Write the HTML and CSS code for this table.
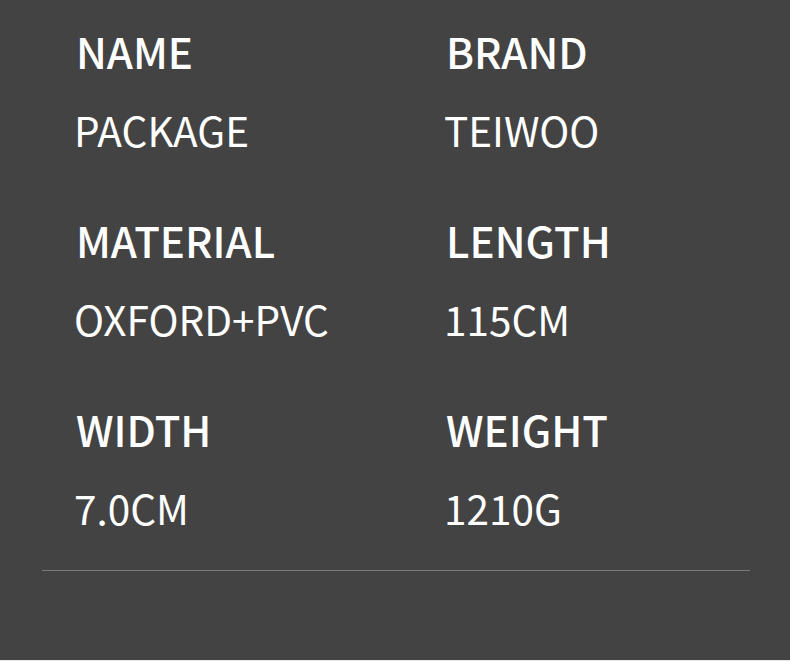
FILE: index.html
```html
<!DOCTYPE html>
<html>
<head>
<meta charset="utf-8">
<link rel="stylesheet" href="styles.css">
</head>
<body>
<section class="panel">
  <div class="specs">
    <div class="item"><div class="label">NAME</div><div class="value">PACKAGE</div></div>
    <div class="item"><div class="label">BRAND</div><div class="value">TEIWOO</div></div>
    <div class="item"><div class="label">MATERIAL</div><div class="value">OXFORD+PVC</div></div>
    <div class="item"><div class="label">LENGTH</div><div class="value">115CM</div></div>
    <div class="item"><div class="label">WIDTH</div><div class="value">7.0CM</div></div>
    <div class="item"><div class="label">WEIGHT</div><div class="value">1210G</div></div>
  </div>
  <div class="divider"></div>
</section>
</body>
</html>
```
FILE: styles.css
```css
html, body {
  margin: 0;
  padding: 0;
  background: #e6e6e6;
}
.panel {
  width: 790px;
  height: 660px;
  background: #434343;
  overflow: hidden;
  font-family: "Noto Sans CJK SC", "Noto Sans", sans-serif;
  color: #ffffff;
}
.specs {
  display: grid;
  grid-template-columns: 370px 370px;
  row-gap: 68px;
  padding: 29px 0 0 74px;
}
.label {
  font-size: 42px;
  line-height: 44px;
  font-weight: 500;
  margin-bottom: 37px;
  padding-left: 2px;
}
.value {
  font-size: 40.5px;
  line-height: 40px;
  font-weight: 400;
}
.divider {
  margin: 42px 0 0 42px;
  width: 708px;
  height: 1px;
  background: #7c7c7c;
}
```
